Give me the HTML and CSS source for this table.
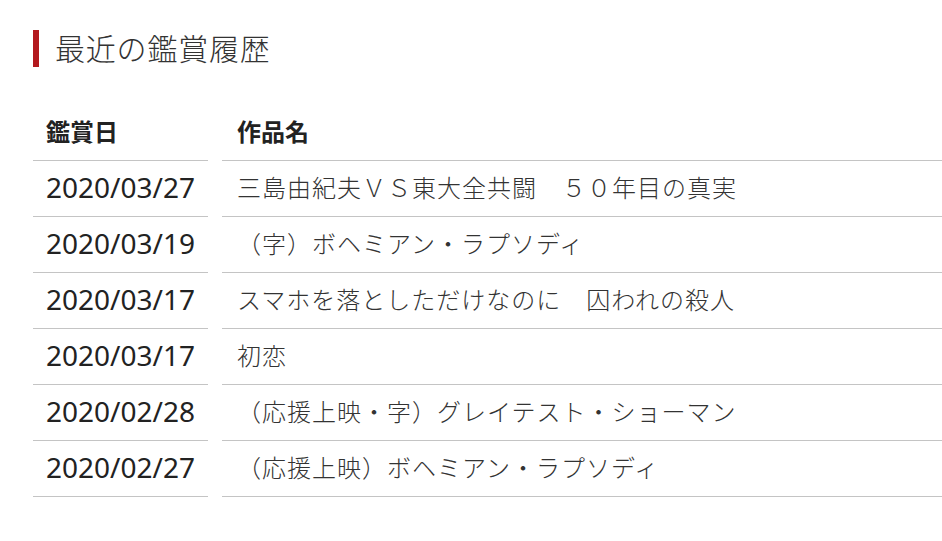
FILE: index.html
```html
<!DOCTYPE html>
<html lang="ja">
<head>
<meta charset="utf-8">
<link rel="stylesheet" href="styles.css">
</head>
<body>
<section class="history">
  <h2 class="history-title">最近の鑑賞履歴</h2>
  <div class="history-table">
    <div class="cell head date">鑑賞日</div>
    <div class="cell head">作品名</div>
    <div class="cell date">2020/03/27</div>
    <div class="cell name">三島由紀夫ＶＳ東大全共闘　５０年目の真実</div>
    <div class="cell date">2020/03/19</div>
    <div class="cell name">（字）ボヘミアン・ラプソディ</div>
    <div class="cell date">2020/03/17</div>
    <div class="cell name">スマホを落としただけなのに　囚われの殺人</div>
    <div class="cell date">2020/03/17</div>
    <div class="cell name">初恋</div>
    <div class="cell date">2020/02/28</div>
    <div class="cell name">（応援上映・字）グレイテスト・ショーマン</div>
    <div class="cell date">2020/02/27</div>
    <div class="cell name">（応援上映）ボヘミアン・ラプソディ</div>
  </div>
</section>
</body>
</html>
```
FILE: styles.css
```css
html, body {
  margin: 0;
  padding: 0;
  background: #fff;
  overflow: hidden;
}
body {
  font-family: "Noto Sans CJK JP", "Noto Sans", sans-serif;
  color: #333;
}
.history {
  padding: 30px 0 0 33px;
}
.history-title {
  margin: 0;
  height: 33px;
  padding-bottom: 4px;
  display: flex;
  align-items: center;
  border-left: 6px solid #b3191e;
  padding-left: 16px;
  font-size: 30px;
  font-weight: 300;
  letter-spacing: 0.8px;
  color: #333;
  line-height: 1;
}
.history-table {
  margin-top: 38px;
  display: grid;
  grid-template-columns: 175px 1fr;
  column-gap: 14px;
}
.cell {
  height: 51px;
  padding-bottom: 4px;
  border-bottom: 1px solid #c4c4c4;
  display: flex;
  align-items: center;
  padding-left: 15px;
  font-size: 24px;
  white-space: nowrap;
}
.cell.date {
  padding-left: 13px;
}
.head {
  font-weight: 700;
  color: #222;
  font-size: 24px;
}
.cell.date:not(.head) {
  font-family: "Noto Sans", sans-serif;
  font-size: 28px;
  color: #222;
}
.name {
  color: #333;
  font-weight: 300;
  letter-spacing: 1px;
}
```
